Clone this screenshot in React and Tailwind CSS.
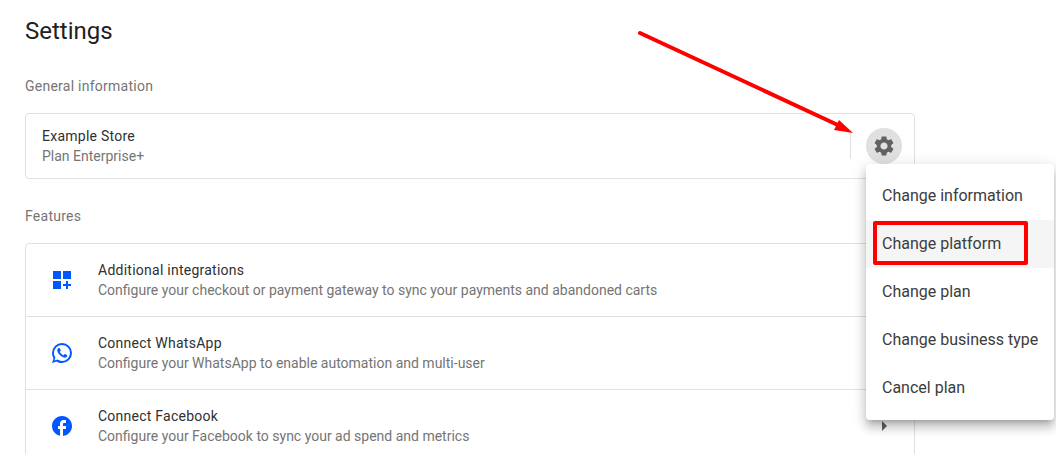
import React from 'react';

const GearIcon = () => (
  <svg className="w-6 h-6 text-[#616161]" viewBox="0 0 24 24" fill="currentColor">
    <path d="M19.14 12.94c.04-.3.06-.61.06-.94 0-.32-.02-.64-.07-.94l2.03-1.58c.18-.14.23-.41.12-.61l-1.92-3.32c-.12-.22-.37-.29-.59-.22l-2.39.96c-.5-.38-1.03-.7-1.62-.94l-.36-2.54c-.04-.24-.24-.41-.48-.41h-3.84c-.24 0-.43.17-.47.41l-.36 2.54c-.59.24-1.13.57-1.62.94l-2.39-.96c-.22-.08-.47 0-.59.22L2.74 8.87c-.12.21-.08.47.12.61l2.03 1.58c-.05.3-.09.63-.09.94s.02.64.07.94l-2.03 1.58c-.18.14-.23.41-.12.61l1.92 3.32c.12.22.37.29.59.22l2.39-.96c.5.38 1.03.7 1.62.94l.36 2.54c.05.24.24.41.48.41h3.84c.24 0 .44-.17.47-.41l.36-2.54c.59-.24 1.13-.56 1.62-.94l2.39.96c.22.08.47 0 .59-.22l1.92-3.32c.12-.22.07-.47-.12-.61l-2.01-1.58zM12 15.6c-1.98 0-3.6-1.62-3.6-3.6s1.62-3.6 3.6-3.6 3.6 1.62 3.6 3.6-1.62 3.6-3.6 3.6z" />
  </svg>
);

const WidgetsIcon = () => (
  <svg className="w-6 h-6 text-[#0057ff]" viewBox="0 0 24 24" fill="currentColor">
    <path d="M3 3h8v8H3zM13 3h8v8h-8zM3 13h8v8H3zM16 13h2v3h3v2h-3v3h-2v-3h-3v-2h3z" />
  </svg>
);

const WhatsAppIcon = () => (
  <svg className="w-6 h-6 text-[#0057ff]" viewBox="0 0 24 24" fill="currentColor">
    <path d="M16.75 13.96c.25.13.41.2.46.3.06.11.04.61-.21 1.18-.2.56-1.24 1.1-1.7 1.12-.46.02-.47.36-2.96-.73-2.49-1.09-3.99-3.75-4.11-3.92-.12-.17-.96-1.38-.92-2.61.05-1.22.69-1.8.95-2.04.24-.26.51-.29.68-.26h.47c.15 0 .36-.06.55.45l.69 1.87c.06.13.1.28.01.44l-.27.41-.39.42c-.12.12-.26.25-.12.5.12.26.62 1.09 1.32 1.78.91.88 1.71 1.17 1.95 1.3.24.14.39.12.54-.04l.81-.94c.19-.25.35-.19.58-.11l1.67.88M12 2a10 10 0 0 1 10 10 10 10 0 0 1-10 10c-1.97 0-3.8-.57-5.35-1.55L2 22l1.55-4.65A9.969 9.969 0 0 1 2 12 10 10 0 0 1 12 2m0 2a8 8 0 0 0-8 8c0 1.72.54 3.31 1.46 4.61L4.5 19.5l2.89-.96A7.95 7.95 0 0 0 12 20a8 8 0 0 0 8-8 8 8 0 0 0-8-8z" />
  </svg>
);

const FacebookIcon = () => (
  <svg className="w-6 h-6 text-[#0057ff]" viewBox="0 0 24 24" fill="currentColor">
    <path d="M22 12c0-5.52-4.48-10-10-10S2 6.48 2 12c0 4.84 3.44 8.87 8 9.8V15H8v-3h2V9.5C10 7.57 11.57 6 13.5 6H16v3h-2c-.55 0-1 .45-1 1v2h3v3h-3v6.95c5.05-.5 9-4.76 9-9.95z" />
  </svg>
);

const features = [
  {
    title: 'Additional integrations',
    text: 'Configure your checkout or payment gateway to sync your payments and abandoned carts',
    icon: <WidgetsIcon />,
  },
  {
    title: 'Connect WhatsApp',
    text: 'Configure your WhatsApp to enable automation and multi-user',
    icon: <WhatsAppIcon />,
  },
  {
    title: 'Connect Facebook',
    text: 'Configure your Facebook to sync your ad spend and metrics',
    icon: <FacebookIcon />,
  },
];

const menuItems = ['Change information', 'Change platform', 'Change plan', 'Change business type', 'Cancel plan'];

export default function App() {
  return (
    <div className="relative h-[454px] w-[1056px] overflow-hidden bg-white pl-[25px] pt-[15px] font-['Roboto',sans-serif] text-[#303030]">
      <h1 className="text-2xl leading-8 font-normal text-[#212121]">Settings</h1>
      <p className="mt-[29px] text-sm leading-5 tracking-[0.25px] text-[#757575]">General information</p>

      {/* Store card */}
      <div className="mt-[17px] flex h-[66px] w-[890px] items-center rounded border border-[#e0e0e0] pl-4 pr-[12px]">
        <div className="flex-1 text-sm leading-5">
          <div className="tracking-[0.25px]">Example Store</div>
          <div className="text-[#757575]">Plan Enterprise+</div>
        </div>
        <div className="h-[26px] w-px self-center bg-[#e0e0e0]" />
        <button className="ml-[15px] flex h-9 w-9 items-center justify-center rounded-full bg-[#e0e0e0]">
          <GearIcon />
        </button>
      </div>

      <p className="mt-[27px] text-sm leading-5 tracking-[0.25px] text-[#757575]">Features</p>

      {/* Features list */}
      <div className="mt-[17px] w-[890px] rounded-t border border-[#e0e0e0]">
        {features.map((f, i) => (
          <div key={f.title} className={`flex items-center pl-4 pr-[27px] ${i > 0 ? 'h-[73px] border-t border-[#e0e0e0]' : 'h-[72px]'}`}>
            <div className="mr-4 flex w-10 justify-center">{f.icon}</div>
            <div className="flex-1 text-sm leading-5">
              <div className="tracking-[0.25px]">{f.title}</div>
              <div className="text-[#757575]">{f.text}</div>
            </div>
            <div className="h-0 w-0 border-y-[5px] border-l-[5px] border-y-transparent border-l-[#616161]" />
          </div>
        ))}
      </div>

      {/* Open menu */}
      <div className="absolute left-[866px] top-[164px] w-[188px] rounded bg-white py-2 text-base text-[#3c3c3c] shadow-[0_5px_5px_-3px_rgba(0,0,0,0.2),0_8px_10px_1px_rgba(0,0,0,0.14),0_3px_14px_2px_rgba(0,0,0,0.12)]">
        {menuItems.map((label) => (
          <div key={label} className={`flex h-12 items-center whitespace-nowrap pl-4 ${label === 'Change platform' ? 'bg-[#f5f5f5]' : ''}`}>
            {label}
          </div>
        ))}
      </div>

      {/* Red annotations */}
      <div className="absolute left-[873px] top-[221px] h-[44px] w-[155px] rounded-[2px] border-4 border-[#ff0000]" />
      <svg className="absolute left-0 top-0 h-[454px] w-[1056px]" viewBox="0 0 1056 454" fill="none">
        <path d="M640 33 L840 126" stroke="#ff0000" strokeWidth="4" strokeLinecap="round" />
        <path d="M853 133 L834 130 L839 120 Z" fill="#ff0000" />
      </svg>
    </div>
  );
}
